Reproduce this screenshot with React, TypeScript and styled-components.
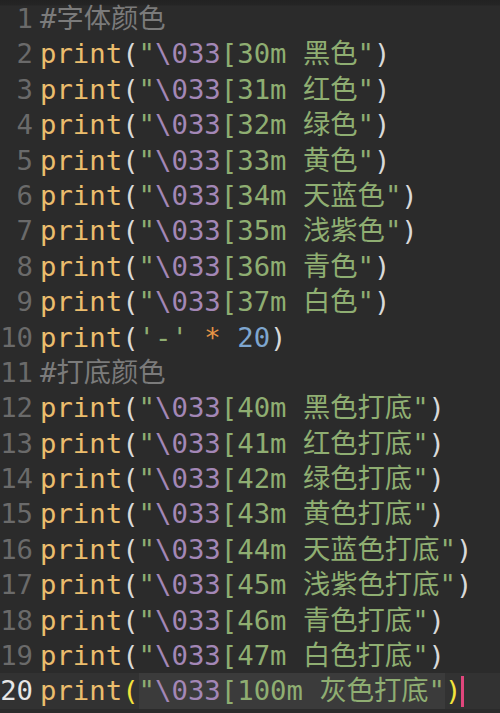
import React from "react";
import styled, { createGlobalStyle } from "styled-components";

const Global = createGlobalStyle`
  html, body { margin: 0; padding: 0; background: #2b2b2b; }
  #root { width: 500px; height: 713px; overflow: hidden; }
`;

const Editor = styled.div`
  width: 500px;
  height: 713px;
  box-sizing: border-box;
  padding-top: 1px;
  background: linear-gradient(#222222 0, #252525 5px, #2b2b2b 6px);
  font-family: "DejaVu Sans Mono", "Noto Sans CJK SC", monospace;
  font-size: 27.3px;
  overflow: hidden;
`;

const Line = styled.div<{ $current?: boolean }>`
  display: flex;
  height: 35.4px;
  line-height: 35.4px;
  white-space: pre;
  background: ${(p) => (p.$current ? "#323232" : "transparent")};
`;

const Num = styled.span<{ $current?: boolean }>`
  flex: none;
  width: 33px;
  margin-right: 7px;
  text-align: right;
  color: ${(p) => (p.$current ? "#e6e6e6" : "#6a6a6a")};
`;

const Code = styled.span`
  display: flex;
  align-items: center;
`;

const Kw = styled.span`color: #ebbd6d;`;
const Paren = styled.span<{ $match?: boolean }>`
  color: ${(p) => (p.$match ? "#f3e33c" : "#d9d9d9")};
`;
const Str = styled.span`color: #8fae72;`;
const Esc = styled.span`color: #a387b6;`;
const Comment = styled.span`color: #7b7b7b;`;
const Op = styled.span`color: #e69345;`;
const NumLit = styled.span`color: #7ea6cf;`;
const Plain = styled.span`color: #d9d9d9;`;
const MatchBox = styled.span`
  background: #3b3b3b;
`;
const Cursor = styled.span`
  display: inline-block;
  width: 3px;
  height: 31px;
  background: #e0467c;
`;

type Row =
  | { kind: "comment"; text: string }
  | { kind: "esc"; code: string; label: string }
  | { kind: "mul" };

const rows: Row[] = [
  { kind: "comment", text: "#字体颜色" },
  { kind: "esc", code: "30m", label: "黑色" },
  { kind: "esc", code: "31m", label: "红色" },
  { kind: "esc", code: "32m", label: "绿色" },
  { kind: "esc", code: "33m", label: "黄色" },
  { kind: "esc", code: "34m", label: "天蓝色" },
  { kind: "esc", code: "35m", label: "浅紫色" },
  { kind: "esc", code: "36m", label: "青色" },
  { kind: "esc", code: "37m", label: "白色" },
  { kind: "mul" },
  { kind: "comment", text: "#打底颜色" },
  { kind: "esc", code: "40m", label: "黑色打底" },
  { kind: "esc", code: "41m", label: "红色打底" },
  { kind: "esc", code: "42m", label: "绿色打底" },
  { kind: "esc", code: "43m", label: "黄色打底" },
  { kind: "esc", code: "44m", label: "天蓝色打底" },
  { kind: "esc", code: "45m", label: "浅紫色打底" },
  { kind: "esc", code: "46m", label: "青色打底" },
  { kind: "esc", code: "47m", label: "白色打底" },
];

const StringBody = ({ code, label }: { code: string; label: string }) => (
  <>
    <Str>"</Str>
    <Esc>\033</Esc>
    <Str>[{code} {label}"</Str>
  </>
);

export default function App() {
  return (
    <>
      <Global />
      <Editor>
        {rows.map((r, i) => (
          <Line key={i}>
            <Num>{i + 1}</Num>
            <Code>
              {r.kind === "comment" && <Comment>{r.text}</Comment>}
              {r.kind === "esc" && (
                <>
                  <Kw>print</Kw>
                  <Paren>(</Paren>
                  <StringBody code={r.code} label={r.label} />
                  <Paren>)</Paren>
                </>
              )}
              {r.kind === "mul" && (
                <>
                  <Kw>print</Kw>
                  <Paren>(</Paren>
                  <Str>'-'</Str>
                  <Plain> </Plain>
                  <Op>*</Op>
                  <Plain> </Plain>
                  <NumLit>20</NumLit>
                  <Paren>)</Paren>
                </>
              )}
            </Code>
          </Line>
        ))}
        <Line $current>
          <Num $current>20</Num>
          <Code>
            <Kw>print</Kw>
            <Paren $match>(</Paren>
            <MatchBox>
              <StringBody code="100m" label="灰色打底" />
            </MatchBox>
            <Paren $match>)</Paren>
            <Cursor />
          </Code>
        </Line>
      </Editor>
    </>
  );
}
